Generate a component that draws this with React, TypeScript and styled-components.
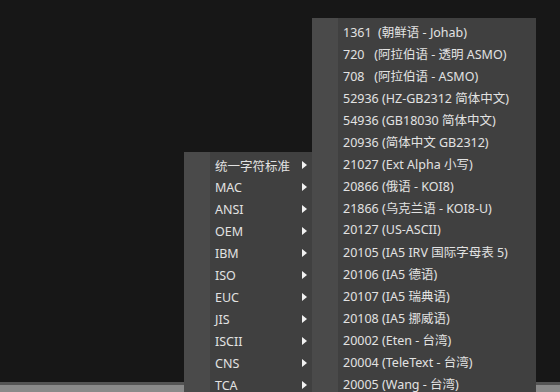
import React from 'react';
import styled, { createGlobalStyle } from 'styled-components';

const GlobalStyle = createGlobalStyle`
    html, body {
        margin: 0;
        padding: 0;
        background: #171717;
    }
`;

const Screen = styled.div`
    position: relative;
    display: flex;
    flex-direction: column;
    width: 560px;
    height: 392px;
    overflow: hidden;

    background-color: #171717;
    font-family: 'Noto Sans', 'Noto Sans CJK SC', sans-serif;
`;

const Workspace = styled.div`
    flex: 1;
`;

const StatusBar = styled.div`
    height: 7px;
    border-top: 3px solid #555555;
    background-color: #8a8a8a;
`;

const Menu = styled.ul<{ $left: number; $top: number; $width: number }>`
    position: absolute;
    left: ${({ $left }) => $left}px;
    top: ${({ $top }) => $top}px;
    width: ${({ $width }) => $width}px;
    margin: 0;
    padding: 2px 0;
    list-style: none;

    background: linear-gradient(to right, #4a4a4a 0, #4a4a4a 26px, #404040 26px);
`;

const MenuItem = styled.li`
    display: flex;
    align-items: center;
    height: 22px;
    padding-left: 31px;
    padding-right: 6px;

    font-size: 12.5px;
    color: #e2e2e2;
    white-space: pre;
`;

const Label = styled.span`
    flex: 1;
`;

const Arrow = styled.span`
    width: 0;
    height: 0;
    margin-right: 11px;

    border-top: 4.5px solid transparent;
    border-bottom: 4.5px solid transparent;
    border-left: 5px solid #f2f2f2;
`;

const families = ['统一字符标准', 'MAC', 'ANSI', 'OEM', 'IBM', 'ISO', 'EUC', 'JIS', 'ISCII', 'CNS', 'TCA'];

const codepages = [
    '1361  (朝鲜语 - Johab)',
    '720   (阿拉伯语 - 透明 ASMO)',
    '708   (阿拉伯语 - ASMO)',
    '52936 (HZ-GB2312 简体中文)',
    '54936 (GB18030 简体中文)',
    '20936 (简体中文 GB2312)',
    '21027 (Ext Alpha 小写)',
    '20866 (俄语 - KOI8)',
    '21866 (乌克兰语 - KOI8-U)',
    '20127 (US-ASCII)',
    '20105 (IA5 IRV 国际字母表 5)',
    '20106 (IA5 德语)',
    '20107 (IA5 瑞典语)',
    '20108 (IA5 挪威语)',
    '20002 (Eten - 台湾)',
    '20004 (TeleText - 台湾)',
    '20005 (Wang - 台湾)',
];

export default function App() {
    return (
        <>
            <GlobalStyle />
            <Screen>
                <Workspace />
                <StatusBar />

                <Menu $left={184} $top={152} $width={140}>
                    {families.map((f) => (
                        <MenuItem key={f}>
                            <Label>{f}</Label>
                            <Arrow />
                        </MenuItem>
                    ))}
                </Menu>

                <Menu $left={312} $top={18} $width={224}>
                    {codepages.map((c) => (
                        <MenuItem key={c}>
                            <Label>{c}</Label>
                        </MenuItem>
                    ))}
                </Menu>
            </Screen>
        </>
    );
}
